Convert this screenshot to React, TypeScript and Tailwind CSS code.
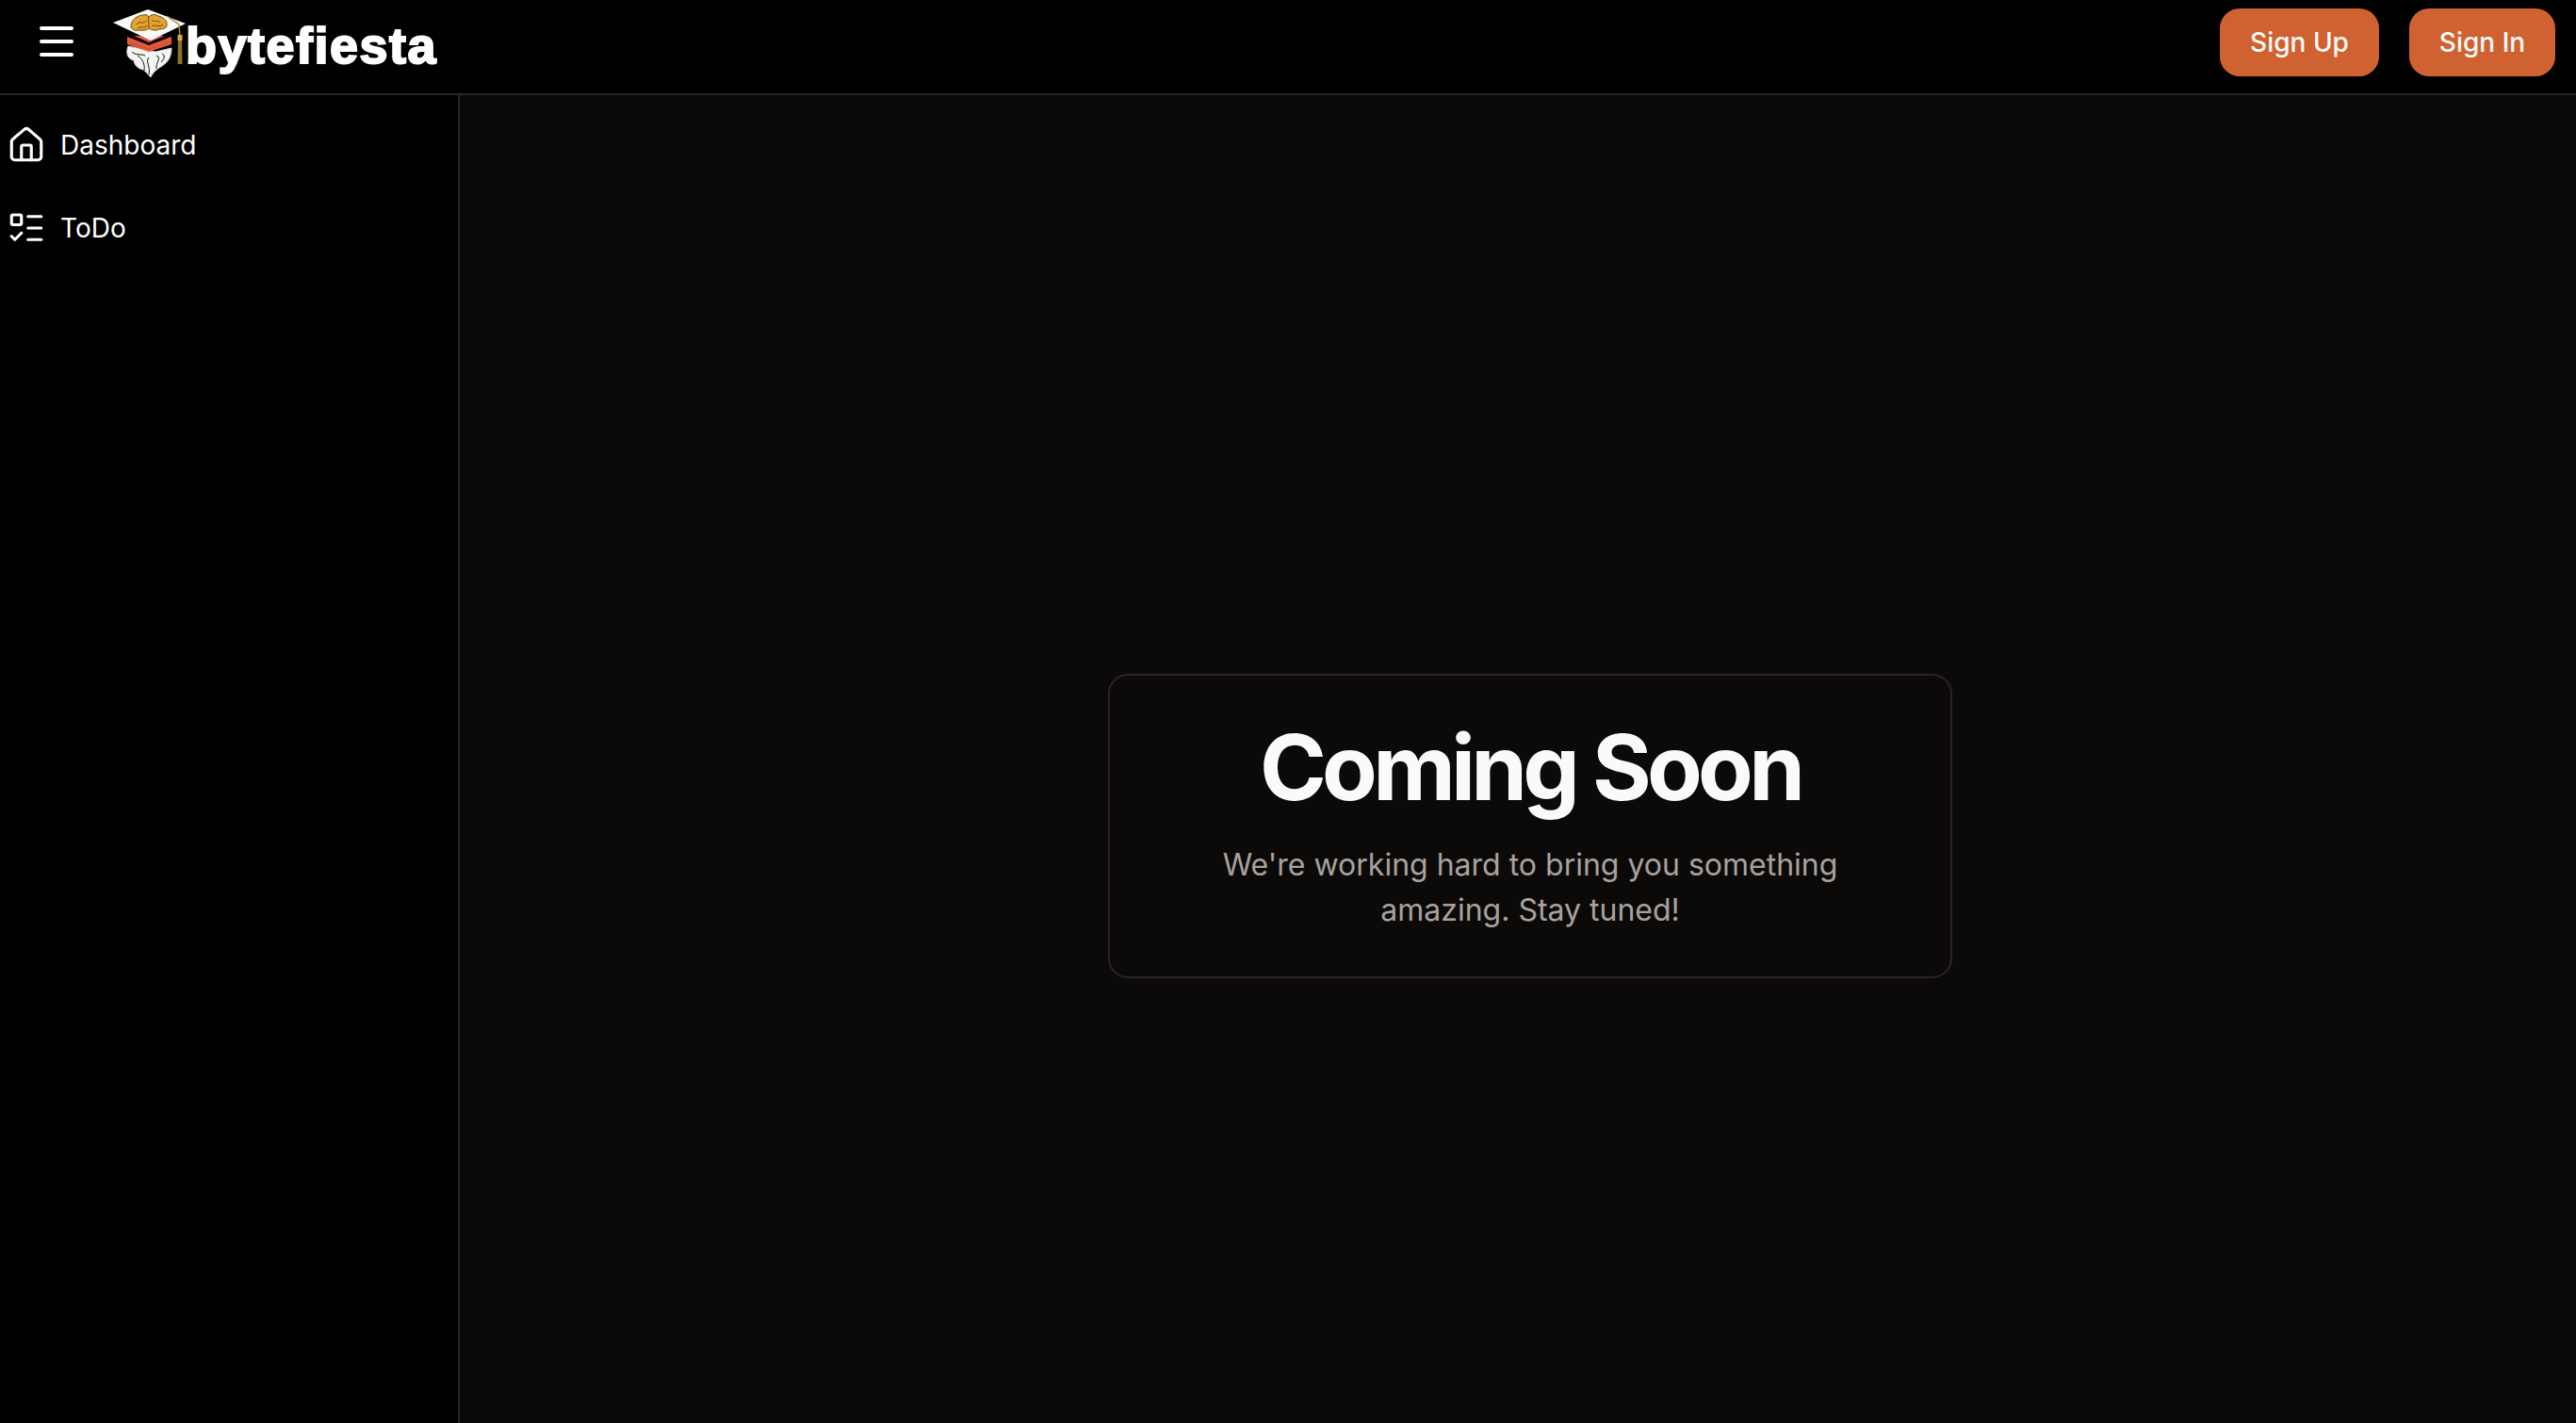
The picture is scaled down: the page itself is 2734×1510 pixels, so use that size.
import { House, ListTodo, Menu } from 'lucide-react';

function Logo() {
  return (
    <div className="flex items-center">
      <svg width="90" height="90" viewBox="110 0 90 90" className="shrink-0">
        {/* beard */}
        <path d="M136 48 C133 56 136 62 142 63 C143 70 148 72 152 73 C155 75 158 79 160 81 C162 76 167 72 172 69 C176 66 182 62 182 50 L165 54 Z" fill="#f4f4f2" stroke="#d8d8d8" strokeWidth="1" />
        <path d="M146 58 C152 62 154 68 153 74 M158 60 C154 64 160 70 158 78 M166 58 C172 60 165 66 166 72 M140 54 C144 58 150 56 154 58 M172 56 C176 58 174 62 171 65" fill="none" stroke="#111" strokeWidth="1" />
        {/* red band */}
        <path d="M135 37 L182 37 L182 46 L158 54 L135 46 Z" fill="#e4573f" />
        <path d="M135 34 L158 44 L182 34 L182 38 L158 47 L135 38 Z" fill="#050505" />
        <path d="M139 45 L158 51 L180 44" fill="none" stroke="#a83a28" strokeWidth="0.8" strokeDasharray="2 1.5" />
        {/* board */}
        <path d="M120 23 L157 9 L197 24 L160 42 Z" fill="#fbfbf9" />
        {/* brain */}
        <path d="M139 27 C139 20 146 15 152 15 C155 14 157 15 158 17 C160 14 165 14 168 16 C173 17 178 21 177 26 C177 29 172 30 169 30 C166 32 161 31 158 29 C155 32 150 31 147 31 C143 32 139 30 139 27 Z" fill="#e3a32e" stroke="#6b4a10" strokeWidth="1" />
        <path d="M145 25 C148 20 152 26 155 21 M146 29 C150 26 153 30 156 26 M161 20 C164 24 167 19 170 23 M161 27 C165 24 168 29 173 25 M157.500 17 L158 29" fill="none" stroke="#6b4a10" strokeWidth="1" />
        {/* tassel */}
        <path d="M177 16 L190 25 L191 38" fill="none" stroke="#b08a2e" strokeWidth="1.500" />
        <path d="M189 36 L193 36 L193.500 67 L188.500 67 Z" fill="#8a7428" />
        <rect x="188.500" y="36" width="5" height="6" fill="#d9a63a" />
      </svg>
      <span className="ml-[-3px] mt-[4px] font-['Liberation_Sans',sans-serif] text-[54px] leading-none font-bold tracking-[1.5px] text-white [-webkit-text-stroke:2px_white]">
        bytefiesta
      </span>
    </div>
  );
}

export default function App() {
  return (
    <div className="h-screen flex flex-col overflow-hidden bg-[#0c0a09] text-[#fafaf9] font-['Inter',sans-serif]">
      {/* Navbar */}
      <header className="h-[101px] shrink-0 flex items-center justify-between bg-black border-b-2 border-[#292524] pl-[36px] pr-[22px]">
        <div className="flex items-center">
          <Menu className="w-[48px] h-[48px] shrink-0 -mt-[12px] text-white" strokeWidth={2} />
          <div className="-mt-[8px] ml-[26px]">
            <Logo />
          </div>
        </div>
        <div className="flex items-center gap-[32px] -mt-[10px]">
          <button className="h-[72px] w-[169px] rounded-[21px] bg-[#cf6230] text-[28px] font-medium text-[#fafaf9]">Sign Up</button>
          <button className="h-[72px] w-[155px] rounded-[21px] bg-[#cf6230] text-[28px] font-medium text-[#fafaf9]">Sign In</button>
        </div>
      </header>

      <div className="flex-1 flex min-h-0">
        {/* Sidebar */}
        <aside className="w-[488px] shrink-0 bg-black border-r-2 border-[#292524] pt-[9px] pl-[7px]">
          <div className="h-[88px] flex items-center gap-[15px] text-[28px] text-white">
            <House className="w-[42px] h-[42px]" strokeWidth={1.8} />
            <span>Dashboard</span>
          </div>
          <div className="h-[88px] flex items-center gap-[15px] text-[28px] text-white">
            <ListTodo className="w-[42px] h-[42px]" strokeWidth={1.8} />
            <span>ToDo</span>
          </div>
        </aside>

        {/* Coming soon */}
        <main className="flex-1 flex items-center justify-center pt-[142px] pl-[26px]">
          <div className="w-[896px] border-2 border-[#292524] rounded-[21px] px-14 pt-[49px] pb-[46px] text-center">
            <h1 className="text-[96px] leading-[96px] font-bold tracking-[-4.8px] mb-[32px]">Coming Soon</h1>
            <p className="text-[32px] leading-[48px] text-[#a8a29e]">We're working hard to bring you something amazing. Stay tuned!</p>
          </div>
        </main>
      </div>
    </div>
  );
}
